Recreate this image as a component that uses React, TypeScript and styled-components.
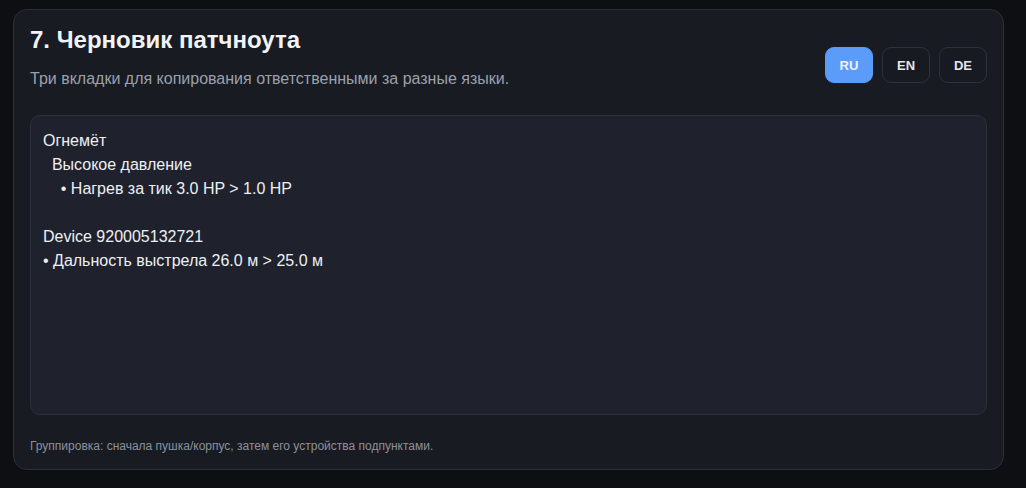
import React, { useState } from 'react';
import styled, { createGlobalStyle } from 'styled-components';

const GlobalStyle = createGlobalStyle`
  html, body {
    margin: 0;
    padding: 0;
    background: #0e0f13;
    font-family: "Liberation Sans", Arial, sans-serif;
  }
`;

const draft = `Огнемёт
  Высокое давление
    • Нагрев за тик 3.0 HP > 1.0 HP

Device 920005132721
• Дальность выстрела 26.0 м > 25.0 м`;

const LANGS = ['RU', 'EN', 'DE'];

const Page = styled.div`
  padding: 9px 22px 18px 13px;
`;

const Card = styled.section`
  height: 461px;
  box-sizing: border-box;
  background: #181b22;
  border: 1px solid #2b2f3a;
  border-radius: 14px;
  padding: 15px 16px 0 16px;
  display: flex;
  flex-direction: column;
`;

const Header = styled.div`
  display: flex;
  justify-content: space-between;
  align-items: flex-start;
`;

const Title = styled.h2`
  margin: 0;
  font-size: 24px;
  line-height: 30px;
  font-weight: 700;
  color: #f1f3f6;
`;

const Subtitle = styled.p`
  margin: 14px 0 0;
  font-size: 16px;
  line-height: 20px;
  color: #9ba1ac;
`;

const Tabs = styled.div`
  display: flex;
  gap: 9px;
  margin-top: 22px;
`;

const Tab = styled.button<{ $active?: boolean }>`
  width: 48px;
  height: 36px;
  border-radius: 9px;
  border: 1px solid ${(p) => (p.$active ? '#5b9cfb' : '#2d313c')};
  background: ${(p) => (p.$active ? '#5b9cfb' : '#171a20')};
  color: ${(p) => (p.$active ? '#eef3fb' : '#e4e6ea')};
  font-family: "Liberation Sans", Arial, sans-serif;
  font-size: 13px;
  font-weight: 700;
  cursor: pointer;
  padding: 0;
`;

const Draft = styled.textarea`
  margin-top: 26px;
  height: 300px;
  box-sizing: border-box;
  width: 100%;
  resize: none;
  background: #1f222d;
  border: 1px solid #2c303d;
  border-radius: 10px;
  padding: 13px 12px 12px;
  color: #eef0f3;
  font-family: "Liberation Sans", Arial, sans-serif;
  font-size: 16px;
  line-height: 24px;
  white-space: pre-wrap;
  outline: none;
`;

const Note = styled.p`
  margin: 23px 0 0;
  font-size: 12px;
  line-height: 16px;
  color: #8c919c;
`;

export default function App() {
  const [lang, setLang] = useState('RU');

  return (
    <>
      <GlobalStyle />
      <Page>
        <Card>
          <Header>
            <div>
              <Title>7. Черновик патчноута</Title>
              <Subtitle>Три вкладки для копирования ответственными за разные языки.</Subtitle>
            </div>
            <Tabs>
              {LANGS.map((l) => (
                <Tab key={l} $active={l === lang} onClick={() => setLang(l)}>
                  {l}
                </Tab>
              ))}
            </Tabs>
          </Header>
          <Draft readOnly value={draft} />
          <Note>Группировка: сначала пушка/корпус, затем его устройства подпунктами.</Note>
        </Card>
      </Page>
    </>
  );
}
